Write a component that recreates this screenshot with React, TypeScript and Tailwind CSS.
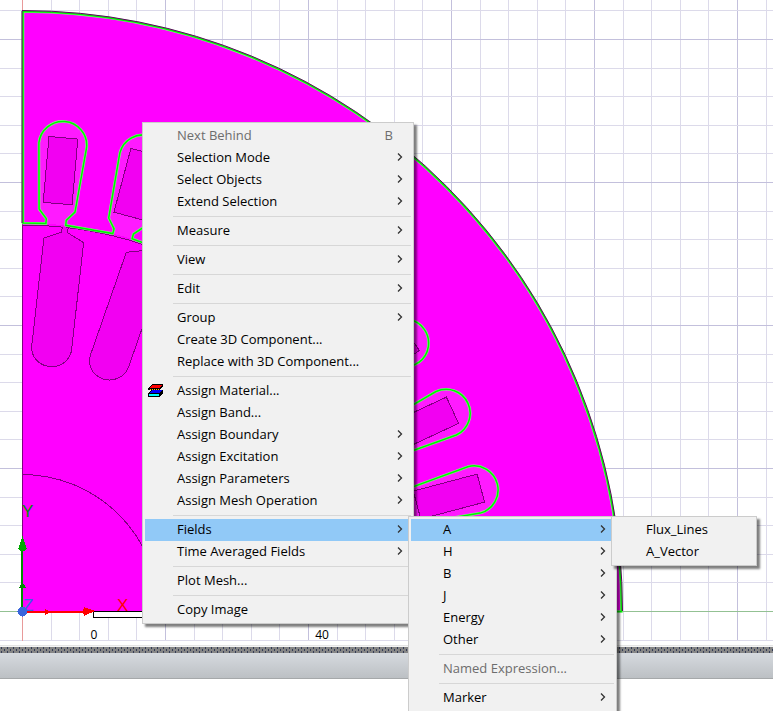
import React from "react";

const OX = 22;
const OY = 611;
const STATOR_ANGLES = [5, 15, 25, 35, 45, 55, 65, 75, 85];
const ROTOR_ANGLES = [0, 1, 2, 3, 4, 5, 6].map((i) => 6.43 + i * 12.857);

// Turns a (tangential, radial) pair on a slot axis into canvas coordinates.
function at(angle: number, t: number, r: number): string {
  const a = (angle * Math.PI) / 180;
  const x = OX + r * Math.sin(a) + t * Math.cos(a);
  const y = OY - r * Math.cos(a) + t * Math.sin(a);
  return `${x.toFixed(1)} ${y.toFixed(1)}`;
}

function slotOutline(a: number): string {
  return [
    at(a, -10, 388),
    `L${at(a, -10, 393)}`,
    `L${at(a, -18, 402)}`,
    `L${at(a, -24, 468)}`,
    `A24 24 0 0 1 ${at(a, 24, 468)}`,
    `L${at(a, 18, 402)}`,
    `L${at(a, 10, 393)}`,
    `L${at(a, 10, 388)}`,
  ].join(" ");
}

const statorPath = [
  "M23 11.5 L23 223",
  ...STATOR_ANGLES.map((a) => `L${slotOutline(a)}`),
  "L411 611.5 L621.5 611.5 A599.5 599.5 0 0 0 23 11.5 Z",
].join(" ");

function rotorSlot(a: number): string {
  return `M${at(a, -3, 386)} L${at(a, -3, 381)} L${at(a, -20, 373)} L${at(a, -20, 265)} A20 19 0 0 0 ${at(a, 20, 265)} L${at(a, 20, 373)} L${at(a, 3, 381)} L${at(a, 3, 386)}`;
}

function coil(a: number): string {
  return `M${at(a, -14.5, 475)} L${at(a, 14.5, 475)} L${at(a, 14.5, 409)} L${at(a, -14.5, 409)} Z`;
}

const minor = Array.from({ length: 100 }, (_, i) => i - 2);

function Model() {
  return (
    <svg className="block h-full w-full" shapeRendering="crispEdges" role="img" aria-label="Motor quarter model">
      <g fill="none" strokeWidth="1">
        {minor.map((i) => {
          const x = Math.round(OX + i * 28.6) + 0.5;
          return <line key={i} x1={x} x2={x} y1="0" y2="640" stroke={i % 5 === 0 ? "#c3c0dc" : "#dcdaea"} />;
        })}
        {minor.slice(0, 26).map((k) => {
          const i = k + 1;
          const y = Math.round(OY - i * 28.6) + 0.5;
          return <line key={i} x1="0" x2="100%" y1={y} y2={y} stroke={i % 5 === 0 ? "#c3c0dc" : "#dcdaea"} />;
        })}
        <line x1="22.5" x2="22.5" y1="0" y2="641" stroke="#e89a9a" />
        <line x1="0" x2="100%" y1="611.5" y2="611.5" stroke="#93c193" />
      </g>

      <path d="M22 611 V11 A600 600 0 0 1 622 611 Z" fill="#ff00ff" />
      <g fill="none" stroke="#800080">
        <path d="M22.5 611 V225 A386 386 0 0 1 408 611" />
        <path d="M22.5 474.5 A137 137 0 0 1 159 611" />
      </g>
      <g stroke="#800080" fill="#f200f2">
        {ROTOR_ANGLES.map((a) => (
          <path key={a} d={rotorSlot(a)} />
        ))}
      </g>
      {STATOR_ANGLES.map((a) => (
        <path key={a} d={`M${slotOutline(a)}`} fill="#ff1aff" />
      ))}
      <g stroke="#800080" fill="#f200f2">
        {STATOR_ANGLES.map((a) => (
          <path key={a} d={coil(a)} />
        ))}
      </g>
      <g fill="none" shapeRendering="geometricPrecision">
        <path d={statorPath} stroke="#80ff80" strokeWidth="2.6" />
        <path d={statorPath} stroke="#00f000" strokeWidth="1.5" />
        <path d="M22 10.5 A600.5 600.5 0 0 1 622.5 611" stroke="#600060" />
      </g>
      <line x1="22" x2="22" y1="11" y2="223" stroke="#500050" shapeRendering="geometricPrecision" />

      <rect x="93.5" y="611.5" width="114" height="6" fill="#fff" stroke="#000" />
      <rect x="207.5" y="611.5" width="114" height="6" stroke="#000" />

      <g fill="#008c00">
        <rect x="21" y="548" width="2" height="63" />
        <path d="M22.5 536 L27 549 L24 551 H20 L18 549 Z" fill="#00a800" />
        <path d="M22.5 582 L26 588 H19 Z" />
      </g>
      <g fill="#ff0000">
        <rect x="22" y="611" width="64" height="2" />
        <path d="M95 611 L84 607 L83 612 L84 616 Z" />
        <path d="M51 612 L45 609 V615 Z" />
      </g>
      <circle cx="22.5" cy="611.5" r="5" fill="#3a66dc" />
      <g className="font-['Liberation_Sans',sans-serif] text-[17px]">
        <text x="22" y="517" fill="#008c00">Y</text>
        <text x="117" y="611" fill="#ff0000">X</text>
        <text x="23" y="611" fill="#3a66dc">Z</text>
      </g>
      <g className="font-['Open_Sans',sans-serif] text-xs font-medium" fill="#000" textAnchor="middle">
        <text x="94" y="639">0</text>
        <text x="322" y="639">40</text>
      </g>
    </svg>
  );
}

function Splitter() {
  return (
    <svg className="block h-[6px] w-full shrink-0" shapeRendering="crispEdges" aria-hidden="true">
      <pattern id="grip" width="6" height="4" patternUnits="userSpaceOnUse">
        <rect width="6" height="4" fill="#868686" />
        <rect x="1" width="1" height="2" fill="#343c56" />
        <rect x="4" y="2" width="1" height="2" fill="#343c56" />
      </pattern>
      <rect width="100%" height="6" fill="url(#grip)" />
    </svg>
  );
}

function MaterialIcon() {
  return (
    <svg className="h-4 w-4" viewBox="0 0 16 16" shapeRendering="crispEdges" aria-hidden="true">
      <path d="M5 2 H16 V4 L12 8 H1 V6 Z" fill="#000" />
      <path d="M5 3 H15 L12 6 H2 Z" fill="#ff0000" />
      <path d="M5 8 H16 V11 L12 15 H1 V11 Z" fill="#000" />
      <path d="M3 7.5 H13" stroke="#ffc000" strokeDasharray="1 1" />
      <path d="M5 8 H15 L12 11 H3 Z" fill="#0000ff" />
      <path d="M2 12 H12 V14 H2 Z" fill="#00ffff" />
    </svg>
  );
}

function Chevron() {
  return (
    <svg className="h-2 w-2" viewBox="0 0 8 8" aria-hidden="true">
      <path d="M2 0.5 L5.5 4 L2 7.5" fill="none" stroke="#333" strokeWidth="1.3" />
    </svg>
  );
}

type Entry = { label: string; sub?: boolean; off?: boolean; hot?: boolean; keys?: string; icon?: boolean } | null;

const mainMenu: Entry[] = [
  { label: "Next Behind", off: true, keys: "B" },
  { label: "Selection Mode", sub: true },
  { label: "Select Objects", sub: true },
  { label: "Extend Selection", sub: true },
  null,
  { label: "Measure", sub: true },
  null,
  { label: "View", sub: true },
  null,
  { label: "Edit", sub: true },
  null,
  { label: "Group", sub: true },
  { label: "Create 3D Component..." },
  { label: "Replace with 3D Component..." },
  null,
  { label: "Assign Material...", icon: true },
  { label: "Assign Band..." },
  { label: "Assign Boundary", sub: true },
  { label: "Assign Excitation", sub: true },
  { label: "Assign Parameters", sub: true },
  { label: "Assign Mesh Operation", sub: true },
  null,
  { label: "Fields", sub: true, hot: true },
  { label: "Time Averaged Fields", sub: true },
  null,
  { label: "Plot Mesh..." },
  null,
  { label: "Copy Image" },
];

const fieldsMenu: Entry[] = [
  { label: "A", sub: true, hot: true },
  { label: "H", sub: true },
  { label: "B", sub: true },
  { label: "J", sub: true },
  { label: "Energy", sub: true },
  { label: "Other", sub: true },
  null,
  { label: "Named Expression...", off: true },
  null,
  { label: "Marker", sub: true },
];

const vectorMenu: Entry[] = [{ label: "Flux_Lines" }, { label: "A_Vector" }];

function Menu({ entries, place, label }: { entries: Entry[]; place: string; label: string }) {
  return (
    <div
      role="menu"
      aria-label={label}
      className={`absolute border border-[#cccccc] bg-[#f1f1f1] p-[2px] shadow-[3px_3px_2px_rgba(0,0,0,0.5)] ${place}`}
    >
      {entries.map((e, i) =>
        e === null ? (
          <div key={i} role="separator" className="ml-7 flex h-[7px] items-center">
            <div className="h-px w-full bg-[#d7d7d7]" />
          </div>
        ) : (
          <button
            key={i}
            type="button"
            role="menuitem"
            disabled={e.off}
            aria-haspopup={e.sub ? "menu" : undefined}
            className={`flex h-[22px] w-full items-center pr-[7px] pb-[2px] text-left whitespace-nowrap ${e.hot ? "bg-[#91c9f7]" : ""} ${e.off ? "text-[#6d6d6d]" : "text-black"}`}
          >
            <span className="flex w-8 shrink-0 pl-[2px]">{e.icon && <MaterialIcon />}</span>
            <span className="flex-1">{e.label}</span>
            {e.keys && <span className="mr-[11px]">{e.keys}</span>}
            {e.sub && <Chevron />}
          </button>
        ),
      )}
    </div>
  );
}

export default function App() {
  return (
    <div className="relative flex h-screen flex-col overflow-hidden bg-white font-['Open_Sans',sans-serif] text-[13px] leading-[18px]">
      <main className="min-h-0 flex-1 overflow-hidden border-b border-[#e4e4e4]">
        <Model />
      </main>
      <div className="h-px shrink-0 bg-[#f4f4f4]" />
      <Splitter />
      <div className="h-[26px] shrink-0 border-b border-[#a5a8aa] bg-linear-to-b from-[#d6dadf] to-[#bcc0c4]" />
      <footer className="h-8 shrink-0 bg-white" />

      <Menu entries={mainMenu} label="Modeler" place="left-[142px] top-[122px] w-[272px]" />
      <Menu entries={fieldsMenu} label="Fields" place="left-[408px] top-[516px] w-[209px]" />
      <Menu entries={vectorMenu} label="A" place="left-[611px] top-[516px] w-[146px]" />
    </div>
  );
}
